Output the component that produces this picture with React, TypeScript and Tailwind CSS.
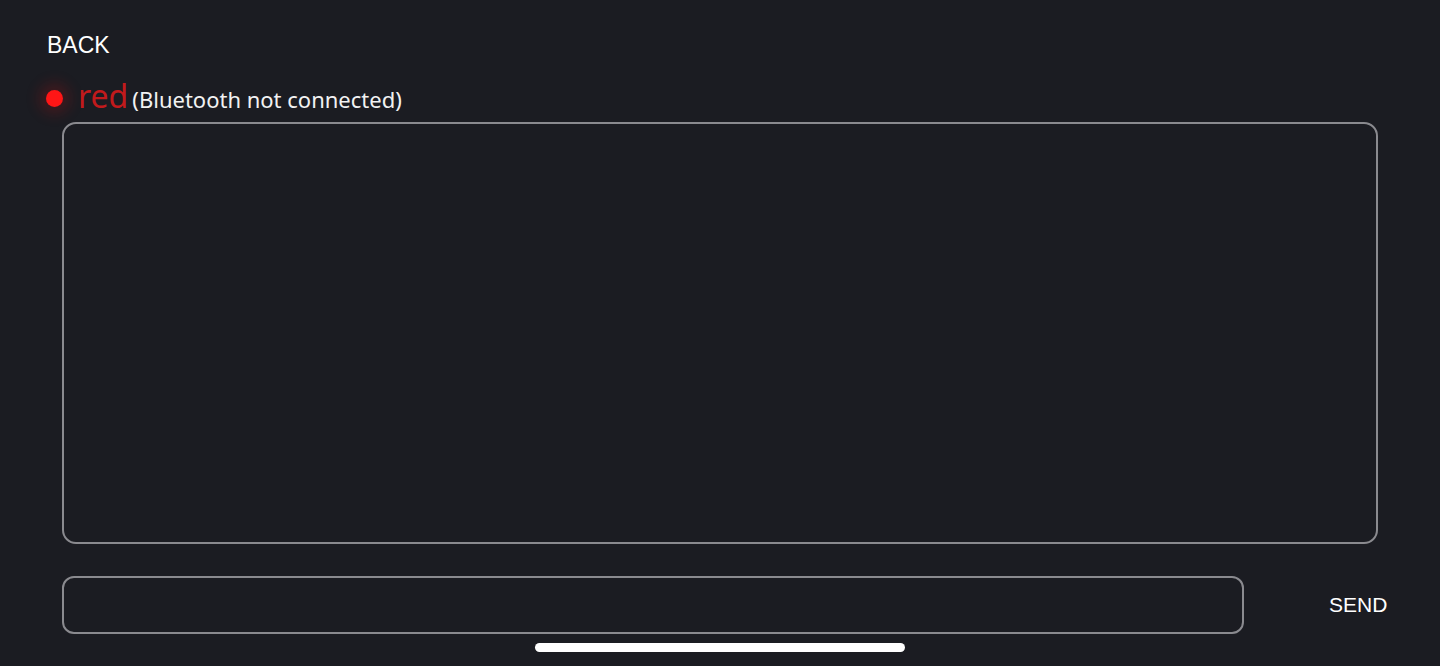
export default function App() {
  return (
    <div className="relative flex h-[666px] w-[1440px] flex-col overflow-hidden bg-[#1b1c22] font-['Noto_Sans',sans-serif] text-white">
      {/* Header */}
      <div className="pl-[47px] pt-[31px]">
        <span className="font-['Liberation_Sans',Arial,sans-serif] text-[23px] leading-[28px]">BACK</span>
      </div>

      {/* Status */}
      <div className="mt-[19px] flex h-[40px] items-center pl-[46px]">
        <div className="size-[17px] shrink-0 rounded-full bg-[#ff1616] shadow-[0_0_14px_7px_rgba(200,20,20,0.22)]" />
        <div className="ml-[15px] flex items-baseline pb-[5px]">
          <span className="text-[32px] leading-[35px] text-[#c21a1c]">red</span>
          <span className="ml-[4px] text-[22px] leading-[28px] text-[#f2f2f2]">(Bluetooth not connected)</span>
        </div>
      </div>

      {/* Log area */}
      <div className="ml-[62px] mt-[4px] h-[422px] w-[1316px] rounded-[14px] border-2 border-[#8a8a8f]" />

      {/* Input row */}
      <div className="ml-[62px] mt-[32px] flex items-center">
        <div className="h-[58px] w-[1182px] rounded-[12px] border-2 border-[#8a8a8f]" />
        <span className="ml-[85px] font-['Liberation_Sans',Arial,sans-serif] text-[21px] leading-[28px]">SEND</span>
      </div>

      {/* Home indicator */}
      <div className="absolute left-[535px] top-[643px] h-[9px] w-[370px] rounded-full bg-white" />
    </div>
  )
}
